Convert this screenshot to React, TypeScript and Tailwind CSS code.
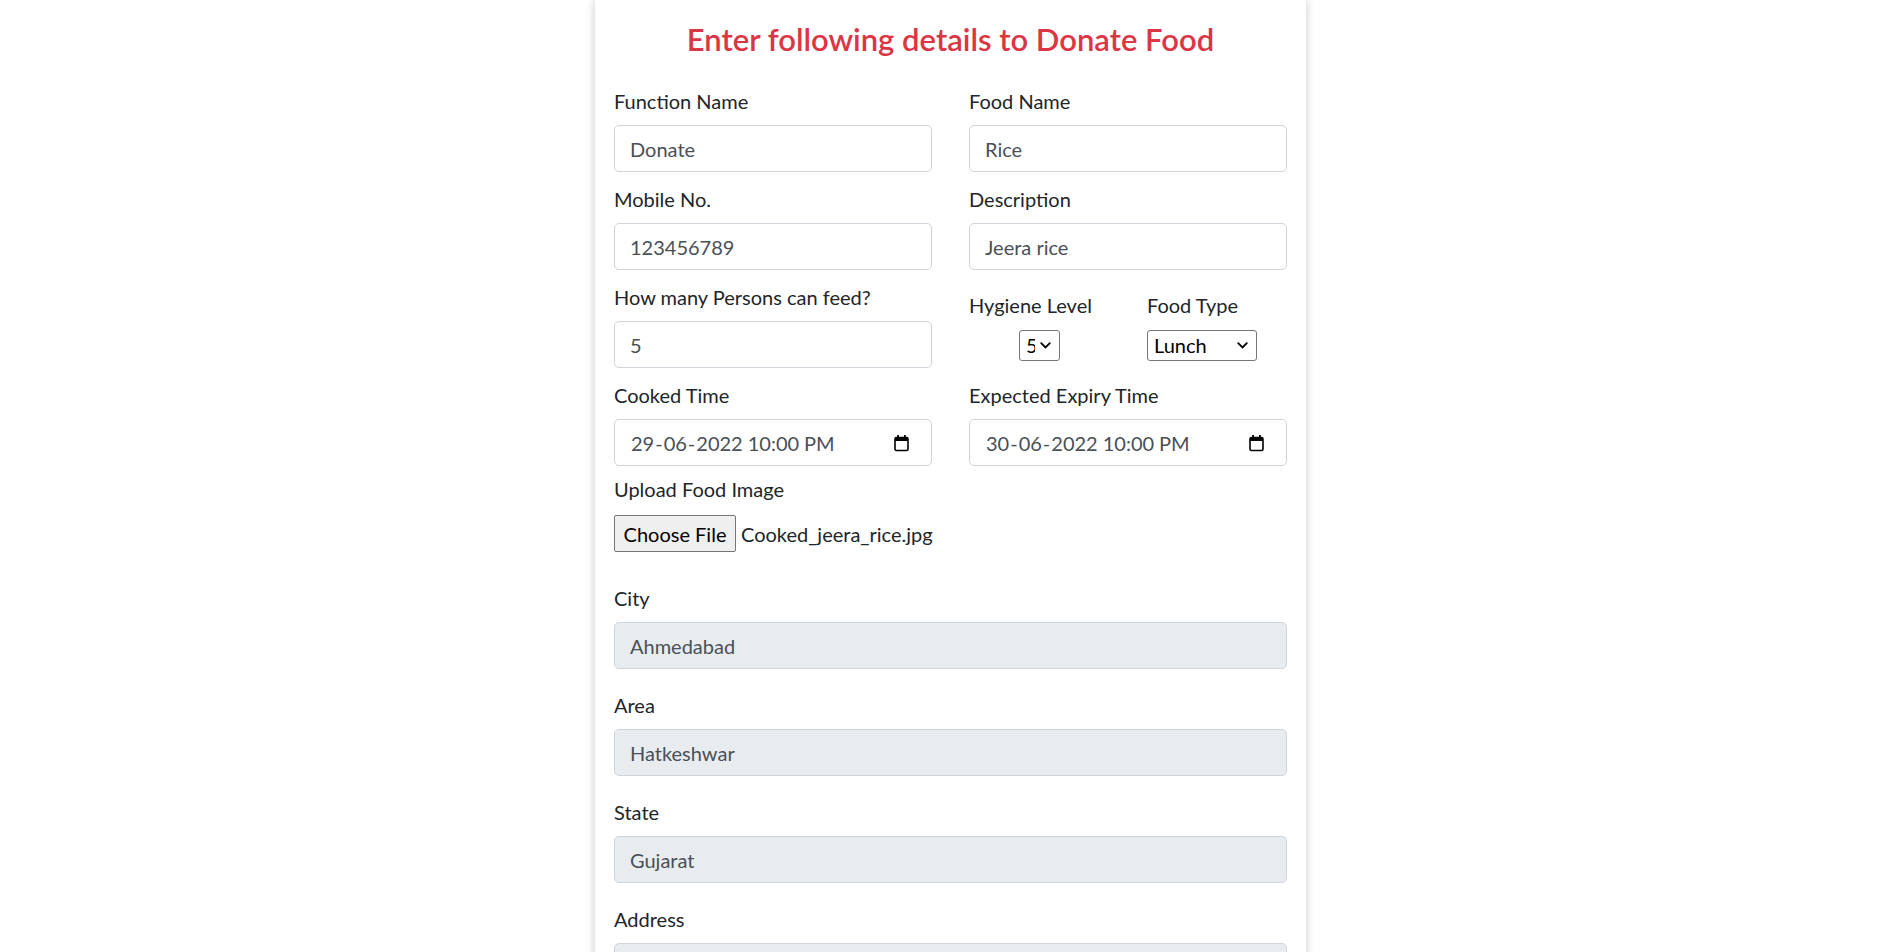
import React from "react";

const CalendarIcon = () => (
  <svg width="15" height="18" viewBox="0 0 15 18" className="shrink-0">
    <rect x="1" y="3.5" width="13" height="13" rx="1.5" fill="none" stroke="#000" strokeWidth="1.6" />
    <rect x="1" y="3.5" width="13" height="3.5" fill="#000" />
    <rect x="3.2" y="1" width="1.8" height="3" fill="#000" />
    <rect x="10" y="1" width="1.8" height="3" fill="#000" />
  </svg>
);

const Chevron = () => (
  <svg width="11" height="7" viewBox="0 0 11 7" className="pointer-events-none absolute right-[9px] top-[12px]">
    <path d="M1.2 1.2 L5.5 5.4 L9.8 1.2" fill="none" stroke="#000" strokeWidth="1.8" strokeLinecap="round" />
  </svg>
);

function Label({ children, gap = "mb-[9px]" }: { children: React.ReactNode; gap?: string }) {
  return <label className={"block text-[20px] leading-[30px] text-[#212529] " + gap}>{children}</label>;
}

function TextField({ label, value, disabled, gap = "mb-[12px]" }: { label: string; value: string; disabled?: boolean; gap?: string }) {
  return (
    <div className={gap}>
      <Label>{label}</Label>
      <input
        readOnly
        value={value}
        className={
          "block w-full h-[47px] px-[15px] text-[20px] text-[#495057] border border-[#ced4da] rounded-[5px] outline-none " +
          (disabled ? "bg-[#e9ecef]" : "bg-white")
        }
      />
    </div>
  );
}

function DateField({ label, d, m, y }: { label: string; d: string; m: string; y: string }) {
  return (
    <div className="mb-[8px]">
      <Label>{label}</Label>
      <div className="flex items-center justify-between h-[47px] pl-[16px] pr-[22px] text-[20px] text-[#495057] border border-[#ced4da] rounded-[5px] bg-white">
        <div className="flex items-center">
          <span>{d}</span>
          <span className="mx-[1px]">-</span>
          <span>{m}</span>
          <span className="mx-[1px]">-</span>
          <span>{y}</span>
          <span className="ml-[5px]">10:00</span>
          <span className="ml-[5px]">PM</span>
        </div>
        <CalendarIcon />
      </div>
    </div>
  );
}

function Select({ value, options, width }: { value: string; options: string[]; width: string }) {
  return (
    <div className={"relative h-[31px] " + width}>
      <select
        defaultValue={value}
        className="appearance-none w-full h-full pl-[6px] pr-6 text-[20px] leading-[29px] text-black bg-white border border-[#767676] rounded-[3px] outline-none"
      >
        {options.map((o) => (
          <option key={o}>{o}</option>
        ))}
      </select>
      <Chevron />
    </div>
  );
}

export default function App() {
  return (
    <div className="min-h-screen bg-white font-['Lato',sans-serif] text-[#212529]">
      <div className="mx-auto w-[711px] bg-white px-[19px] pt-5 pb-10 shadow-[0_0_9px_rgba(0,0,0,0.22)]">
        <h2 className="text-center text-[31px] leading-[38px] font-semibold text-[#dc3545] mb-[28px]">
          Enter following details to Donate Food
        </h2>

        <div className="grid grid-cols-2 gap-x-[37px]">
          <TextField label="Function Name" value="Donate" />
          <TextField label="Food Name" value="Rice" />
          <TextField label="Mobile No." value="123456789" />
          <TextField label="Description" value="Jeera rice" />
          <TextField label="How many Persons can feed?" value="5" />
          <div className="flex pt-[8px]">
            <div className="w-[178px]">
              <Label gap="mb-[10px]">Hygiene Level</Label>
              <div className="ml-[50px]">
                <Select value="5" options={["1", "2", "3", "4", "5"]} width="w-[41px]" />
              </div>
            </div>
            <div className="flex-1">
              <Label gap="mb-[10px]">Food Type</Label>
              <Select value="Lunch" options={["Breakfast", "Lunch", "Dinner"]} width="w-[110px]" />
            </div>
          </div>
          <DateField label="Cooked Time" d="29" m="06" y="2022" />
          <DateField label="Expected Expiry Time" d="30" m="06" y="2022" />
        </div>

        <div className="mb-[31px]">
          <Label gap="mb-[11px]">Upload Food Image</Label>
          <div className="flex items-center">
            <button className="h-[37px] w-[122px] text-[20px] text-black bg-[#efefef] border border-[#767676] rounded-[2px]">
              Choose File
            </button>
            <span className="ml-[5px] text-[20px] text-[#212529]">Cooked_jeera_rice.jpg</span>
          </div>
        </div>

        <TextField label="City" value="Ahmedabad" disabled gap="mb-[21px]" />
        <TextField label="Area" value="Hatkeshwar" disabled gap="mb-[21px]" />
        <TextField label="State" value="Gujarat" disabled gap="mb-[21px]" />
        <TextField label="Address" value="Near Hatkeshwar Circle" disabled gap="mb-[21px]" />

        <div className="flex justify-center">
          <button className="px-6 h-[47px] text-[20px] text-white bg-[#0d6efd] rounded-[5px]">Submit</button>
        </div>
      </div>
    </div>
  );
}
